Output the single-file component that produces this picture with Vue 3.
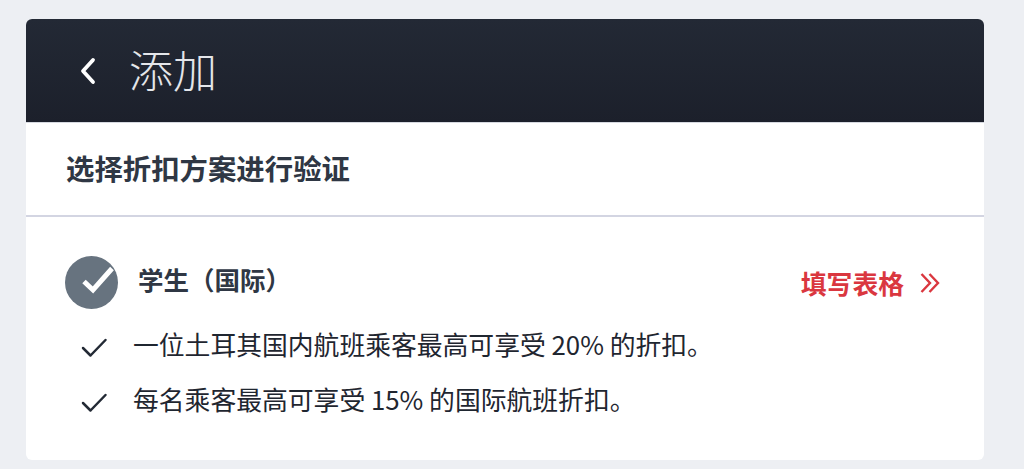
<script setup>
const benefits = [
  { before: '一位土耳其国内航班乘客最高可享受 ', pct: '20%', after: ' 的折扣。' },
  { before: '每名乘客最高可享受 ', pct: '15%', after: ' 的国际航班折扣。' }
]
</script>

<template>
  <div class="page">
    <section class="card">
      <header class="head">
        <svg class="back" width="20" height="30" viewBox="0 0 20 30" fill="none">
          <path d="M15 3 L5 14 L15 25" stroke="#fff" stroke-width="3.800" stroke-linecap="round" stroke-linejoin="round" />
        </svg>
        <h1 class="title">添加</h1>
      </header>
      <div class="sub">选择折扣方案进行验证</div>
      <div class="body">
        <div class="plan">
          <svg class="badge" width="53" height="53" viewBox="0 0 53 53">
            <circle cx="26.500" cy="26.500" r="26.500" fill="#67737f" />
            <path d="M19 25.500 L28 34 L47 12.500" fill="none" stroke="#fff" stroke-width="5" />
          </svg>
          <div class="plan-name">学生（国际）</div>
          <a class="fill">
            <span>填写表格</span>
            <svg width="20" height="22" viewBox="0 0 20 22" fill="none">
              <path d="M1.500 2 L10 11 L1.500 20 M9.500 2 L18 11 L9.500 20" stroke="#da373f" stroke-width="2.400" />
            </svg>
          </a>
        </div>
        <ul class="list">
          <li v-for="b in benefits" :key="b.pct" class="item">
            <svg class="tick" width="28" height="22" viewBox="0 0 28 22" fill="none">
              <path d="M3 11 L10.500 18.500 L25.500 3" stroke="#232a35" stroke-width="2.500" stroke-linecap="round" stroke-linejoin="round" />
            </svg>
            <span class="text">{{ b.before }}{{ b.pct }}{{ b.after }}</span>
          </li>
        </ul>
      </div>
    </section>
  </div>
</template>

<style>
html, body { margin: 0; background: #edeff3; }
</style>

<style scoped>
.page {
  width: 1024px;
  height: 469px;
  box-sizing: border-box;
  padding: 19px 40px 9px 26px;
  font-family: "Noto Sans CJK SC", "Noto Sans", sans-serif;
  overflow: hidden;
}
.card {
  height: 441px;
  background: #fff;
  border-radius: 6px;
  overflow: hidden;
  display: flex;
  flex-direction: column;
}
.head {
  height: 104px;
  flex: none;
  display: flex;
  align-items: center;
  padding-left: 52px;
  background: linear-gradient(#232935, #1c202b);
  border-bottom: 1px solid #d6d9e0;
  box-sizing: border-box;
}
.back { flex: none; margin-top: 2px; }
.title {
  margin: 0 0 4px 31px;
  color: #e4e6ea;
  font-size: 44px;
  font-weight: 300;
  line-height: 1;
}
.sub {
  height: 94px;
  flex: none;
  box-sizing: border-box;
  padding: 28px 0 0 40px;
  border-bottom: 2px solid #d3d5e2;
  color: #2f3744;
  font-size: 28.400px;
  font-weight: 700;
  line-height: 34px;
}
.body { padding: 39px 42px 0 39px; }
.plan { display: flex; align-items: flex-start; }
.badge { flex: none; }
.plan-name {
  margin: 6px 0 0 20px;
  color: #2f3744;
  font-size: 25.500px;
  font-weight: 700;
  line-height: 34px;
}
.fill {
  margin: 12px 2px 0 auto;
  display: flex;
  align-items: center;
  gap: 16px;
  color: #da373f;
  font-size: 25.800px;
  font-weight: 700;
  line-height: 30px;
}
.list { list-style: none; margin: 7px 0 0; padding: 0 0 0 15px; }
.item { display: flex; align-items: center; height: 55px; }
.tick { flex: none; margin-top: 8px; }
.text {
  margin-left: 25px;
  color: #1f2630;
  font-size: 25.800px;
  font-weight: 400;
  line-height: 34px;
}
</style>
